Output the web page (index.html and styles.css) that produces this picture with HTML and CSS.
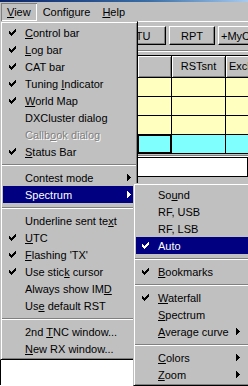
FILE: index.html
```html
<!DOCTYPE html>
<html lang="en">
<head>
    <meta charset="UTF-8">
    <meta name="viewport" content="width=device-width, initial-scale=1.0">
    <title>View menu</title>
    <link rel="stylesheet" href="styles.css">
</head>
<body>

    <div class="titlebar"></div>

    <div class="menubar">
        <div class="menubar-item open"><u>V</u>iew</div>
        <div class="menubar-item">Confi<u>g</u>ure</div>
        <div class="menubar-item"><u>H</u>elp</div>
    </div>

    <!-- Application window behind the menus -->
    <div class="window">
        <div class="toolbar">
            <button class="btn">TU</button>
            <button class="btn">RPT</button>
            <button class="btn">+MyCall</button>
        </div>
        <div class="etch"></div>

        <div class="grid">
            <div class="hcell"></div>
            <div class="hcell c2">RSTsnt</div>
            <div class="hcell c3">Exchange</div>

            <div class="cell"></div><div class="cell"></div><div class="cell"></div>
            <div class="cell"></div><div class="cell"></div><div class="cell"></div>
            <div class="cell"></div><div class="cell"></div><div class="cell"></div>

            <div class="cell current focus"></div>
            <div class="cell current"></div>
            <div class="cell current"></div>
        </div>

        <div class="etch low"></div>
        <div class="textbox"></div>
        <div class="spacer"></div>
    </div>
    <div class="panel"></div>

    <!-- View menu -->
    <div class="menu main-menu">
        <div class="item"><span class="mark"><svg class="check" viewBox="0 0 7 7"><path d="M6 0h1v1h-1zM5 1h2v1h-2zM0 2h1v1h-1zM4 2h3v1h-3zM0 3h2v1h-2zM3 3h3v1h-3zM0 4h5v1h-5zM1 5h3v1h-3zM2 6h1v1h-1z"/></svg></span><span class="label"><u>C</u>ontrol bar</span></div>
        <div class="item"><span class="mark"><svg class="check" viewBox="0 0 7 7"><path d="M6 0h1v1h-1zM5 1h2v1h-2zM0 2h1v1h-1zM4 2h3v1h-3zM0 3h2v1h-2zM3 3h3v1h-3zM0 4h5v1h-5zM1 5h3v1h-3zM2 6h1v1h-1z"/></svg></span><span class="label"><u>L</u>og bar</span></div>
        <div class="item"><span class="mark"><svg class="check" viewBox="0 0 7 7"><path d="M6 0h1v1h-1zM5 1h2v1h-2zM0 2h1v1h-1zM4 2h3v1h-3zM0 3h2v1h-2zM3 3h3v1h-3zM0 4h5v1h-5zM1 5h3v1h-3zM2 6h1v1h-1z"/></svg></span><span class="label">CAT bar</span></div>
        <div class="item"><span class="mark"><svg class="check" viewBox="0 0 7 7"><path d="M6 0h1v1h-1zM5 1h2v1h-2zM0 2h1v1h-1zM4 2h3v1h-3zM0 3h2v1h-2zM3 3h3v1h-3zM0 4h5v1h-5zM1 5h3v1h-3zM2 6h1v1h-1z"/></svg></span><span class="label">Tuning <u>I</u>ndicator</span></div>
        <div class="item"><span class="mark"><svg class="check" viewBox="0 0 7 7"><path d="M6 0h1v1h-1zM5 1h2v1h-2zM0 2h1v1h-1zM4 2h3v1h-3zM0 3h2v1h-2zM3 3h3v1h-3zM0 4h5v1h-5zM1 5h3v1h-3zM2 6h1v1h-1z"/></svg></span><span class="label"><u>W</u>orld Map</span></div>
        <div class="item"><span class="mark"></span><span class="label">DXCluster dialog</span></div>
        <div class="item disabled"><span class="mark"></span><span class="label">Callb<u>o</u>ok dialog</span></div>
        <div class="item"><span class="mark"><svg class="check" viewBox="0 0 7 7"><path d="M6 0h1v1h-1zM5 1h2v1h-2zM0 2h1v1h-1zM4 2h3v1h-3zM0 3h2v1h-2zM3 3h3v1h-3zM0 4h5v1h-5zM1 5h3v1h-3zM2 6h1v1h-1z"/></svg></span><span class="label"><u>S</u>tatus Bar</span></div>
        <div class="sep"></div>
        <div class="item"><span class="mark"></span><span class="label">Contest mode</span><svg class="arrow" viewBox="0 0 4 7"><path d="M0 0h1v7h-1zM1 1h1v5h-1zM2 2h1v3h-1zM3 3h1v1h-1z"/></svg></div>
        <div class="item active"><span class="mark"></span><span class="label">Spectrum</span><svg class="arrow" viewBox="0 0 4 7"><path d="M0 0h1v7h-1zM1 1h1v5h-1zM2 2h1v3h-1zM3 3h1v1h-1z"/></svg></div>
        <div class="sep"></div>
        <div class="item"><span class="mark"></span><span class="label">Underline sent te<u>x</u>t</span></div>
        <div class="item"><span class="mark"><svg class="check" viewBox="0 0 7 7"><path d="M6 0h1v1h-1zM5 1h2v1h-2zM0 2h1v1h-1zM4 2h3v1h-3zM0 3h2v1h-2zM3 3h3v1h-3zM0 4h5v1h-5zM1 5h3v1h-3zM2 6h1v1h-1z"/></svg></span><span class="label"><u>U</u>TC</span></div>
        <div class="item"><span class="mark"><svg class="check" viewBox="0 0 7 7"><path d="M6 0h1v1h-1zM5 1h2v1h-2zM0 2h1v1h-1zM4 2h3v1h-3zM0 3h2v1h-2zM3 3h3v1h-3zM0 4h5v1h-5zM1 5h3v1h-3zM2 6h1v1h-1z"/></svg></span><span class="label"><u>F</u>lashing 'TX'</span></div>
        <div class="item"><span class="mark"><svg class="check" viewBox="0 0 7 7"><path d="M6 0h1v1h-1zM5 1h2v1h-2zM0 2h1v1h-1zM4 2h3v1h-3zM0 3h2v1h-2zM3 3h3v1h-3zM0 4h5v1h-5zM1 5h3v1h-3zM2 6h1v1h-1z"/></svg></span><span class="label">Use stic<u>k</u> cursor</span></div>
        <div class="item"><span class="mark"></span><span class="label">Always show IM<u>D</u></span></div>
        <div class="item"><span class="mark"></span><span class="label">Us<u>e</u> default RST</span></div>
        <div class="sep"></div>
        <div class="item"><span class="mark"></span><span class="label">2nd <u>T</u>NC window...</span></div>
        <div class="item"><span class="mark"></span><span class="label"><u>N</u>ew RX window...</span></div>
    </div>

    <!-- Spectrum submenu -->
    <div class="menu sub-menu">
        <div class="item"><span class="mark"></span><span class="label">So<u>u</u>nd</span></div>
        <div class="item"><span class="mark"></span><span class="label">RF, USB</span></div>
        <div class="item"><span class="mark"></span><span class="label">RF, LSB</span></div>
        <div class="item active"><span class="mark"><svg class="check" viewBox="0 0 7 7"><path d="M6 0h1v1h-1zM5 1h2v1h-2zM0 2h1v1h-1zM4 2h3v1h-3zM0 3h2v1h-2zM3 3h3v1h-3zM0 4h5v1h-5zM1 5h3v1h-3zM2 6h1v1h-1z"/></svg></span><span class="label">Auto</span></div>
        <div class="sep"></div>
        <div class="item"><span class="mark"><svg class="check" viewBox="0 0 7 7"><path d="M6 0h1v1h-1zM5 1h2v1h-2zM0 2h1v1h-1zM4 2h3v1h-3zM0 3h2v1h-2zM3 3h3v1h-3zM0 4h5v1h-5zM1 5h3v1h-3zM2 6h1v1h-1z"/></svg></span><span class="label"><u>B</u>ookmarks</span></div>
        <div class="sep"></div>
        <div class="item"><span class="mark"><svg class="check" viewBox="0 0 7 7"><path d="M6 0h1v1h-1zM5 1h2v1h-2zM0 2h1v1h-1zM4 2h3v1h-3zM0 3h2v1h-2zM3 3h3v1h-3zM0 4h5v1h-5zM1 5h3v1h-3zM2 6h1v1h-1z"/></svg></span><span class="label"><u>W</u>aterfall</span></div>
        <div class="item"><span class="mark"></span><span class="label"><u>S</u>pectrum</span></div>
        <div class="item"><span class="mark"></span><span class="label"><u>A</u>verage curve</span><svg class="arrow" viewBox="0 0 4 7"><path d="M0 0h1v7h-1zM1 1h1v5h-1zM2 2h1v3h-1zM3 3h1v1h-1z"/></svg></div>
        <div class="sep"></div>
        <div class="item"><span class="mark"></span><span class="label"><u>C</u>olors</span><svg class="arrow" viewBox="0 0 4 7"><path d="M0 0h1v7h-1zM1 1h1v5h-1zM2 2h1v3h-1zM3 3h1v1h-1z"/></svg></div>
        <div class="item"><span class="mark"></span><span class="label"><u>Z</u>oom</span><svg class="arrow" viewBox="0 0 4 7"><path d="M0 0h1v7h-1zM1 1h1v5h-1zM2 2h1v3h-1zM3 3h1v1h-1z"/></svg></div>
    </div>

</body>
</html>
```

FILE: styles.css
```css
* {
    box-sizing: border-box;
}

html, body {
    margin: 0;
}

body {
    width: 248px;
    height: 386px;
    overflow: hidden;
    position: relative;
    background: #fff;
    font-family: "Liberation Sans", Arial, sans-serif;
    font-size: 11px;
    color: #000;
}

/* Title bar edge + menu bar */
.titlebar {
    height: 2px;
    background: linear-gradient(to right, #0a246a, #3a6ea5 60%, #a6caf0);
}

.menubar {
    height: 19px;
    display: flex;
    padding: 1px 0 0 1px;
    background: #c0c0c0;
}

.menubar-item {
    height: 18px;
    line-height: 18px;
    padding: 0 6px;
}

.menubar-item.open {
    box-shadow: inset 1px 1px #808080, inset -1px -1px #fff;
}

/* Window behind the menus */
.window {
    background: #c0c0c0;
}

.toolbar {
    height: 29px;
    display: flex;
    align-items: flex-start;
    gap: 3px;
    padding: 4px 0 0 120px;
    border-top: 1px solid #fff;
}

.btn {
    flex: none;
    width: 46px;
    height: 19px;
    padding: 0;
    background: #c0c0c0;
    border: 1px solid;
    border-color: #fff #000 #000 #fff;
    box-shadow: inset -1px -1px #808080;
    font: inherit;
    color: #000;
    text-align: center;
    line-height: 16px;
}

.etch {
    height: 2px;
    border-top: 1px solid #808080;
    border-bottom: 1px solid #fff;
}

.etch.low {
    margin-top: 1px;
}

.grid {
    display: grid;
    grid-template-columns: 33px 53px 60px;
    grid-template-rows: 21px repeat(4, 18px);
    gap: 1px;
    margin: 3px 0 0 137px;
    padding: 1px;
    background: #000;
}

.hcell {
    background: #c0c0c0;
    box-shadow: inset 1px 1px #fff, inset -1px -1px #808080;
    line-height: 21px;
    white-space: nowrap;
    overflow: hidden;
}

.hcell.c2 {
    text-align: center;
}

.hcell.c3 {
    padding-left: 3px;
}

.cell {
    background: #ffffc0;
}

.cell.current {
    background: #80ffff;
}

.cell.focus {
    box-shadow: inset 0 0 0 1px #000;
}

.textbox {
    height: 20px;
    margin-left: 137px;
    background: #fff;
    border: 1px solid #000;
}

.spacer {
    height: 8px;
}

.panel {
    height: 200px;
    border-left: 1px solid #000;
    background: #fff;
}

/* Popup menus */
.menu {
    position: absolute;
    padding: 2px;
    background: #c0c0c0;
    border: 1px solid;
    border-color: #c0c0c0 #000 #000 #c0c0c0;
    box-shadow: inset 1px 1px #fff, inset -1px -1px #808080;
}

.main-menu {
    left: 0;
    top: 21px;
    width: 138px;
}

.sub-menu {
    left: 133px;
    top: 183px;
    width: 118px;
}

.item {
    height: 17px;
    display: flex;
    align-items: center;
    white-space: nowrap;
}

.mark {
    flex: none;
    width: 22px;
    display: flex;
    padding-left: 6px;
}

.check {
    width: 7px;
    height: 7px;
    fill: currentColor;
    shape-rendering: crispEdges;
}

.label {
    flex: 1;
}

.arrow {
    flex: none;
    width: 4px;
    height: 7px;
    margin-right: 4px;
    fill: currentColor;
    shape-rendering: crispEdges;
}

.sub-menu .arrow {
    margin-right: 8px;
}

.item.active {
    background: #000080;
    color: #fff;
}

.item.disabled {
    color: #808080;
    text-shadow: 1px 1px #fff;
}

.sep {
    height: 2px;
    margin: 4px -1px 3px;
    border-top: 1px solid #808080;
    border-bottom: 1px solid #fff;
}
```
